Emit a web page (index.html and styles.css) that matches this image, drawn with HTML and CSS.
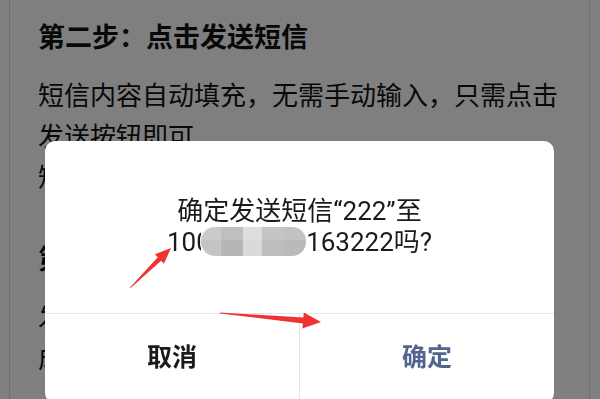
FILE: index.html
```html
<!DOCTYPE html>
<html lang="zh-CN">
<head>
<meta charset="utf-8">
<title>确定发送短信</title>
<link rel="stylesheet" href="styles.css">
</head>
<body>
<main class="page">
  <section class="card">
    <h2 class="step-title">第二步：点击发送短信</h2>
    <p class="step-text">短信内容自动填充，无需手动输入，只需点击发送按钮即可</p>
    <p class="step-text">短信发送后请耐心等待回复</p>
    <h2 class="step-title second">第三步：等待办理结果</h2>
    <p class="step-text">发送成功后将收到短信通知</p>
    <p class="step-text">成功办理后即可使用</p>
  </section>
</main>

<div class="overlay"></div>

<div class="dialog" role="dialog">
  <div class="dialog-body">
    <p class="dialog-msg">确定发送短信“222”至<br>10<span class="cut">0</span><span class="mosaic"></span>163222吗?</p>
  </div>
  <div class="dialog-actions">
    <button class="btn btn-cancel">取消</button>
    <button class="btn btn-ok">确定</button>
  </div>
</div>

<svg class="annotations" width="600" height="399" viewBox="0 0 600 399" aria-hidden="true">
  <polygon fill="#ee3333" points="130,287.5 157.7,257.2 154.9,254.3 171,248 163.9,263.7 161.1,260.8 130.6,288"/>
  <polygon fill="#ee3333" points="220,312.6 303.3,317.4 303.8,312.4 321,322 302.4,328.4 302.8,323.4 220,313.6"/>
</svg>
</body>
</html>
```

FILE: styles.css
```css
html, body {
  margin: 0;
  padding: 0;
  width: 600px;
  height: 399px;
  overflow: hidden;
  background: #ffffff;
  font-family: Roboto, "Noto Sans CJK SC", "Noto Sans", sans-serif;
}

.page {
  padding: 0 10px 0 9px;
  height: 399px;
}

.card {
  height: 399px;
  border-left: 1px solid #dddddd;
  border-right: 1px solid #dddddd;
  padding: 18px 0 0 28px;
  box-sizing: border-box;
  color: #111;
}

.step-title {
  margin: 0 0 18px;
  font-size: 27px;
  line-height: 40px;
  font-weight: 700;
}

.step-title.second {
  margin-top: 41px;
}

.step-text {
  margin: 0;
  font-size: 26px;
  line-height: 41px;
  width: 530px;
}

.overlay {
  position: fixed;
  inset: 0;
  background: rgba(0, 0, 0, 0.5);
}

.dialog {
  position: fixed;
  left: 45px;
  top: 141px;
  width: 509px;
  height: 262px;
  background: #ffffff;
  border-radius: 10px;
  display: flex;
  flex-direction: column;
  overflow: hidden;
}

.dialog-body {
  height: 172px;
  display: flex;
  align-items: center;
  justify-content: center;
  border-bottom: 1px solid #e6e6e6;
}

.dialog-msg {
  margin: 0;
  text-align: center;
  font-size: 26px;
  line-height: 31px;
  color: #1a1a1a;
}

.cut {
  display: inline-block;
  width: 5px;
  overflow: hidden;
  vertical-align: bottom;
}

.mosaic {
  display: inline-block;
  width: 105px;
  height: 29px;
  margin-left: 0;
  vertical-align: -5px;
  border-radius: 14px;
  background:
    linear-gradient(to bottom, rgba(255,255,255,0.12) 0 45%, rgba(0,0,0,0) 45%),
    linear-gradient(to right, #c4c4c4 0 19%, #b6b6b6 19% 40%, #d9d9d9 40% 58%, #bdbdbd 58% 78%, #bababa 78% 100%);
}

.dialog-actions {
  flex: 1;
  display: flex;
}

.btn {
  flex: 1;
  border: 0;
  background: transparent;
  font-family: inherit;
  font-size: 25px;
  font-weight: 700;
  line-height: 30px;
  padding: 29px 0 0;
  margin: 0;
  display: flex;
  justify-content: center;
  align-items: flex-start;
}

.btn-cancel {
  color: #1a1a1a;
  border-right: 1px solid #e6e6e6;
}

.btn-ok {
  color: #52658f;
}

.annotations {
  position: fixed;
  left: 0;
  top: 0;
}
```
